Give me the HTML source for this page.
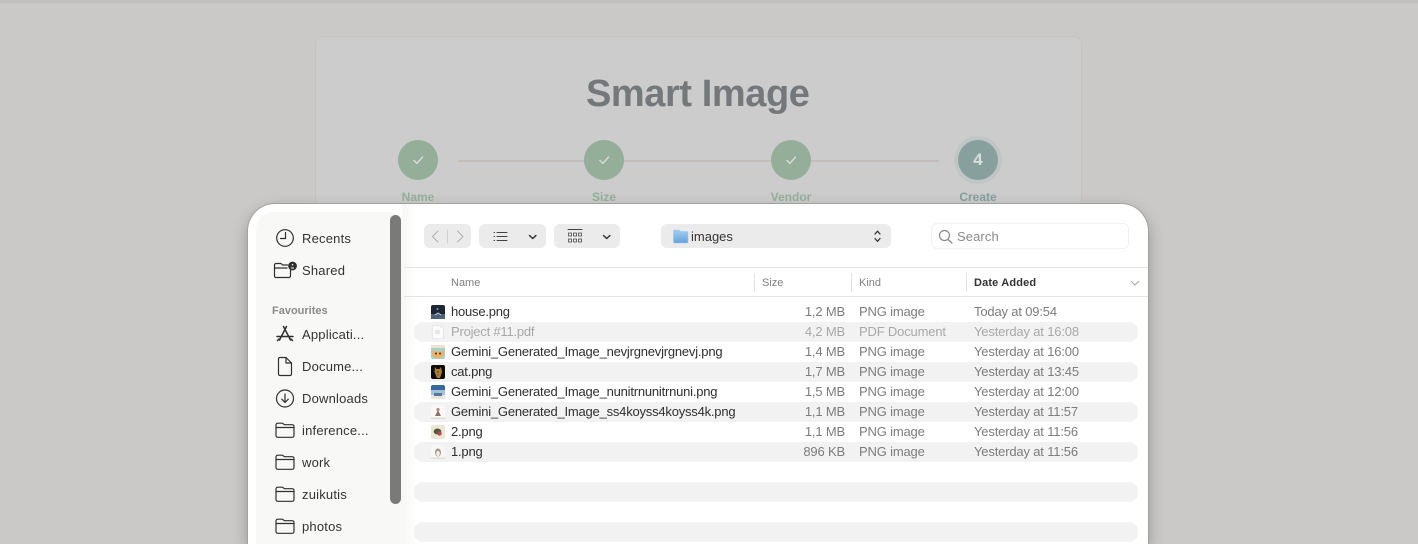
<!DOCTYPE html>
<html><head><meta charset="utf-8">
<style>
*{box-sizing:border-box}
html,body{margin:0;padding:0}
body{width:1418px;height:539px;overflow:hidden;position:relative;background:#cbc9c7;font-family:"Liberation Sans",sans-serif;font-size:13px;color:#2c2c2c}
.a{position:absolute;white-space:nowrap}
.card{left:315px;top:36px;width:767px;height:300px;background:#cccccc;border:1px solid #c5c2bf;border-radius:8px}
.c{width:40px;height:40px;border-radius:50%;background:#94ae99;top:140px}
.sl{font-size:12px;font-weight:bold;color:#95b09c;top:190px;text-align:center;width:80px}
.win{left:248px;top:204px;width:900px;height:340px;background:#fff;border-radius:27px 27px 0 0;box-shadow:0 0 0 1px #a2a2a0,0 6px 16px rgba(0,0,0,.28);overflow:hidden}
.side{left:8px;top:8px;width:146px;height:340px;background:#f8f8f7;border-radius:18px 12px 0 0}
.s{left:54px;font-size:13px;color:#333;line-height:16px;letter-spacing:.2px}
.row{left:166px;width:724px;height:20px;border-radius:9px;background:#f2f2f2}
.t{line-height:20px;font-size:13px;letter-spacing:-.17px}
.n{left:203px;color:#2f2f2f;letter-spacing:-.21px}
.z{left:497px;width:100px;text-align:right;color:#7c7c7c}
.k{left:611px;color:#7c7c7c}
.d{left:726px;color:#7c7c7c}
.th{top:71px;font-size:11px;line-height:16px;color:#7f7f7f}
.btn{background:#ebebeb;border-radius:6px;height:24px;top:20px}
.th2{left:183px}
</style></head><body>
<div class="a" style="left:0;top:0;width:1418px;height:3px;background:#c0bebc"></div>
<div class="a card"></div>
<div class="a" style="left:586px;top:71px;font-size:38px;line-height:46px;font-weight:bold;color:#75787a;letter-spacing:-.42px">Smart Image</div>
<div class="a" style="left:458px;top:160px;width:481px;height:2px;background:#c5bdb9"></div>
<div class="a c" style="left:398px"></div><div class="a c" style="left:584px"></div><div class="a c" style="left:771px"></div>
<div class="a" style="left:954px;top:136px;width:48px;height:48px;border-radius:50%;background:#c0c6c4"></div>
<div class="a c" style="left:958px;background:#87a09d"></div>
<svg class="a" style="left:0;top:0" width="1418" height="210" fill="none" stroke="#d6ddd6" stroke-width="1.4"><path d="M413.500 160l3.400 3.400 6-6.800M599.500 160l3.400 3.400 6-6.800M786.500 160l3.400 3.400 6-6.800"/></svg>
<div class="a" style="left:958px;top:150px;width:40px;text-align:center;font-size:17px;line-height:20px;font-weight:bold;color:#d8dedc">4</div>
<div class="a sl" style="left:378px">Name</div><div class="a sl" style="left:564px">Size</div><div class="a sl" style="left:751px">Vendor</div><div class="a sl" style="left:938px;color:#84a09c">Create</div>

<div class="a win">
 <div class="a side"></div>
 <div class="a" style="left:154px;top:0;width:16px;height:340px;background:linear-gradient(90deg,#f7f7f6,#fff)"></div>
 <div class="a" style="left:142px;top:11px;width:11px;height:289px;border-radius:6px;background:#7a7a7a"></div>
 <svg class="a" style="left:0;top:0" width="154" height="340" fill="none" stroke="#2f2f2f" stroke-width="1.2" stroke-linejoin="round" stroke-linecap="round">
  <circle cx="37" cy="34" r="8.300"/><path d="M37.500 28.500V34.500H32.500"/>
  <path d="M26.500 61v11a1.500 1.500 0 0 0 1.500 1.500h13a1.500 1.500 0 0 0 1.500-1.500v-6M26.500 61a1.500 1.500 0 0 1 1.500-1.500h5l1.500 1.500h5M26.500 64h12.500"/>
  <circle cx="44.500" cy="62" r="3.800" fill="#2f2f2f"/><circle cx="44.500" cy="60.800" r=".8" fill="#f8f8f7" stroke="none"/><path d="M43.300 64h2.400" stroke="#f8f8f7" stroke-width="1"/>
  <path d="M38.500 122.500L31.500 136M35.500 122.500L42.500 136M29 132.500h16M29.500 136.500l1.500-1.500M44.500 136.500L43 135" stroke-width="1.500"/>
  <path d="M32 153.500h6l5.500 5.500v11a1.500 1.500 0 0 1-1.500 1.500H32a1.500 1.500 0 0 1-1.500-1.500v-15a1.500 1.500 0 0 1 1.500-1.500zM38 153.500v5.500h5.500"/>
  <circle cx="37" cy="194.500" r="8.500"/><path d="M37 190v8.500M33.700 195.200l3.300 3.300 3.300-3.300"/>
  <g id="f" transform="translate(28,218)"><path d="M0 3a1.800 1.800 0 0 1 1.800-1.800h4.700l1.800 1.500h7.900a1.800 1.800 0 0 1 1.800 1.800v9a1.800 1.800 0 0 1-1.800 1.800H1.800A1.800 1.800 0 0 1 0 13.500zM0 5.500h18"/></g>
  <g transform="translate(28,250)"><path d="M0 3a1.800 1.800 0 0 1 1.800-1.800h4.700l1.800 1.500h7.900a1.800 1.800 0 0 1 1.800 1.800v9a1.800 1.800 0 0 1-1.800 1.800H1.800A1.800 1.800 0 0 1 0 13.500zM0 5.500h18"/></g>
  <g transform="translate(28,282)"><path d="M0 3a1.800 1.800 0 0 1 1.800-1.800h4.700l1.800 1.500h7.900a1.800 1.800 0 0 1 1.800 1.800v9a1.800 1.800 0 0 1-1.800 1.800H1.800A1.800 1.800 0 0 1 0 13.500zM0 5.500h18"/></g>
  <g transform="translate(28,314)"><path d="M0 3a1.800 1.800 0 0 1 1.800-1.800h4.700l1.800 1.500h7.900a1.800 1.800 0 0 1 1.800 1.800v9a1.800 1.800 0 0 1-1.800 1.800H1.800A1.800 1.800 0 0 1 0 13.500zM0 5.500h18"/></g>
 </svg>
 <div class="a s" style="top:27px">Recents</div>
 <div class="a s" style="top:59px">Shared</div>
 <div class="a" style="left:24px;top:100px;font-size:11px;line-height:14px;font-weight:bold;color:#8a8a8a">Favourites</div>
 <div class="a s" style="top:123px">Applicati...</div>
 <div class="a s" style="top:155px">Docume...</div>
 <div class="a s" style="top:187px">Downloads</div>
 <div class="a s" style="top:219px">inference...</div>
 <div class="a s" style="top:251px">work</div>
 <div class="a s" style="top:283px">zuikutis</div>
 <div class="a s" style="top:315px">photos</div>

 <div class="a btn" style="left:176px;width:47px"></div>
 <div class="a btn" style="left:231px;width:67px"></div>
 <div class="a btn" style="left:306px;width:66px"></div>
 <div class="a btn" style="left:413px;width:230px"></div>
 <div class="a" style="left:683px;top:19px;width:198px;height:26px;border:1px solid #f0f0f0;border-radius:6px"></div>
 <svg class="a" style="left:0;top:0" width="900" height="60" fill="none" stroke-linecap="round" stroke-linejoin="round">
  <defs><linearGradient id="g" x1="0" y1="0" x2="0" y2="1"><stop offset="0" stop-color="#a5cdf0"/><stop offset="1" stop-color="#62a2de"/></linearGradient></defs>
  <path d="M190 27l-5.500 5.500 5.500 5.500M209.500 27l5.500 5.500-5.500 5.500" stroke="#b0b0b0" stroke-width="1"/><path d="M199.500 26v13" stroke="#d0d0d0"/>
  <path d="M249 28.500h10M249 32.500h10M249 36.500h10" stroke="#444" stroke-width="1"/><path d="M246 28.500h.6M246 32.500h.6M246 36.500h.6" stroke="#444"/>
  <path d="M281.500 31.500l3.200 3 3.200-3" stroke="#333" stroke-width="1.500"/>
  <path d="M320 25.500h14" stroke="#444"/><rect x="320.500" y="29" width="3" height="3" stroke="#444" stroke-width=".8"/><rect x="325.500" y="29" width="3" height="3" stroke="#444" stroke-width=".8"/><rect x="330.500" y="29" width="3" height="3" stroke="#444" stroke-width=".8"/><rect x="320.500" y="35" width="3" height="3" stroke="#444" stroke-width=".8"/><rect x="325.500" y="35" width="3" height="3" stroke="#444" stroke-width=".8"/><rect x="330.500" y="35" width="3" height="3" stroke="#444" stroke-width=".8"/>
  <path d="M355.500 31.500l3.200 3 3.200-3" stroke="#333" stroke-width="1.500"/>
  <path d="M425.500 27a1 1 0 0 1 1-1h4.500l1.500 1.500h6.500a1 1 0 0 1 1 1V38a1 1 0 0 1-1 1h-12.500a1 1 0 0 1-1-1z" fill="url(#g)" stroke="#9cc6ec" stroke-width=".6"/>
  <path d="M627 30l2.500-2.800 2.500 2.800M627 34.500l2.500 2.800 2.500-2.800" stroke="#333" stroke-width="1.300"/>
  <circle cx="696.500" cy="31.500" r="5" stroke="#8a8a8a" stroke-width="1.200"/><path d="M700 35.500l4 3.500" stroke="#8a8a8a" stroke-width="1.300"/>
 </svg>
 <div class="a" style="left:443px;top:25px;font-size:13px;line-height:16px;color:#333">images</div>
 <div class="a" style="left:709px;top:25px;font-size:13px;line-height:16px;color:#8a8a8a;letter-spacing:.1px">Search</div>

 <div class="a" style="left:156px;top:63px;width:744px;height:1px;background:#e4e4e4"></div>
 <div class="a" style="left:156px;top:92px;width:744px;height:1px;background:#e4e4e4"></div>
 <div class="a" style="left:506px;top:69px;width:1px;height:19px;background:#e2e2e2"></div>
 <div class="a" style="left:603px;top:69px;width:1px;height:19px;background:#e2e2e2"></div>
 <div class="a" style="left:718px;top:69px;width:1px;height:19px;background:#e2e2e2"></div>
 <svg class="a" style="left:881px;top:74px" width="12" height="10" fill="none"><path d="M2 3l4 4 4-4" stroke="#a5a5a5"/></svg>
 <div class="a th" style="left:203px">Name</div><div class="a th" style="left:514px">Size</div><div class="a th" style="left:611px">Kind</div><div class="a th" style="left:726px;font-weight:bold;color:#333;letter-spacing:.15px">Date Added</div>

 <div class="a row" style="top:118px"></div><div class="a row" style="top:158px"></div><div class="a row" style="top:198px"></div><div class="a row" style="top:238px"></div><div class="a row" style="top:278px"></div><div class="a row" style="top:318px"></div>

 <svg class="a th2" style="top:101px" width="14" height="14"><rect width="14" height="14" rx="2" fill="#1d2635"/><rect y="9" width="14" height="5" fill="#4d6278"/><path d="M4 10l3-2 3 2" stroke="#c8d2dc" fill="none"/><circle cx="6.500" cy="4" r="1" fill="#8c99a8"/></svg>
 <svg class="a th2" style="top:121px" width="14" height="14"><path d="M2 .5h7l3.500 3.500v9a.8.8 0 0 1-.8.8H2a.8.8 0 0 1-.8-.8V1.300A.8.8 0 0 1 2 .5z" fill="#fbfbfb" stroke="#e4e4e4"/><rect x="4" y="5" width="5" height="4" fill="#e8e8e8"/></svg>
 <svg class="a th2" style="top:141px" width="14" height="14"><rect width="14" height="14" rx="2" fill="#a9cfc9"/><path d="M2 4l1 2.500h8L12 4l1 5q-1 4-6 4t-6-4z" fill="#eeb066"/><circle cx="5" cy="8.500" r="1" fill="#463024"/><circle cx="9" cy="8.500" r="1" fill="#463024"/><rect y="0" width="14" height="3" fill="#e9e3d0"/></svg>
 <svg class="a th2" style="top:161px" width="14" height="14"><rect width="14" height="14" rx="2" fill="#0e0c0a"/><path d="M4 2l1.500 2h3L10 2l1 5-2 6H6L3.500 7z" fill="#a87c3a"/><path d="M6 7h2M6.500 10h1" stroke="#4c3519"/></svg>
 <svg class="a th2" style="top:181px" width="14" height="14"><rect width="14" height="14" rx="2" fill="#37679c"/><rect y="5" width="14" height="5" fill="#a5c0da"/><rect y="10" width="14" height="4" fill="#e9e6da"/><path d="M3 8h8v3H3z" fill="#59789a"/></svg>
 <svg class="a th2" style="top:201px" width="14" height="14"><rect width="14" height="14" rx="2" fill="#f9f8f6"/><path d="M4 11l3-6 3 6z" fill="#8a7264"/><circle cx="7" cy="4.500" r="1.600" fill="#b08c76"/><rect y="12.500" width="14" height="1.500" fill="#e0dcd4"/></svg>
 <svg class="a th2" style="top:221px" width="14" height="14"><rect width="14" height="14" rx="2" fill="#ece7d5"/><ellipse cx="6.500" cy="6.500" rx="3.800" ry="3" fill="#4f5a3d"/><circle cx="8.500" cy="8.500" r="2.200" fill="#b34a5a"/></svg>
 <svg class="a th2" style="top:241px" width="14" height="14"><rect width="14" height="14" rx="2" fill="#f8f7f5"/><ellipse cx="7" cy="7.500" rx="3" ry="4" fill="#a5948a"/><ellipse cx="7" cy="8.500" rx="1.800" ry="2.600" fill="#f5efe5"/><rect y="12.500" width="14" height="1.500" fill="#e2dfda"/></svg>

 <div class="a t n" style="top:98px">house.png</div><div class="a t z" style="top:98px">1,2 MB</div><div class="a t k" style="top:98px">PNG image</div><div class="a t d" style="top:98px">Today at 09:54</div>
 <div class="a t n" style="top:118px;color:#a8a8a8">Project #11.pdf</div><div class="a t z" style="top:118px;color:#a8a8a8">4,2 MB</div><div class="a t k" style="top:118px;color:#a8a8a8">PDF Document</div><div class="a t d" style="top:118px;color:#a8a8a8">Yesterday at 16:08</div>
 <div class="a t n" style="top:138px">Gemini_Generated_Image_nevjrgnevjrgnevj.png</div><div class="a t z" style="top:138px">1,4 MB</div><div class="a t k" style="top:138px">PNG image</div><div class="a t d" style="top:138px">Yesterday at 16:00</div>
 <div class="a t n" style="top:158px">cat.png</div><div class="a t z" style="top:158px">1,7 MB</div><div class="a t k" style="top:158px">PNG image</div><div class="a t d" style="top:158px">Yesterday at 13:45</div>
 <div class="a t n" style="top:178px">Gemini_Generated_Image_nunitrnunitrnuni.png</div><div class="a t z" style="top:178px">1,5 MB</div><div class="a t k" style="top:178px">PNG image</div><div class="a t d" style="top:178px">Yesterday at 12:00</div>
 <div class="a t n" style="top:198px">Gemini_Generated_Image_ss4koyss4koyss4k.png</div><div class="a t z" style="top:198px">1,1 MB</div><div class="a t k" style="top:198px">PNG image</div><div class="a t d" style="top:198px">Yesterday at 11:57</div>
 <div class="a t n" style="top:218px">2.png</div><div class="a t z" style="top:218px">1,1 MB</div><div class="a t k" style="top:218px">PNG image</div><div class="a t d" style="top:218px">Yesterday at 11:56</div>
 <div class="a t n" style="top:238px">1.png</div><div class="a t z" style="top:238px">896 KB</div><div class="a t k" style="top:238px">PNG image</div><div class="a t d" style="top:238px">Yesterday at 11:56</div>
</div>
</body></html>
